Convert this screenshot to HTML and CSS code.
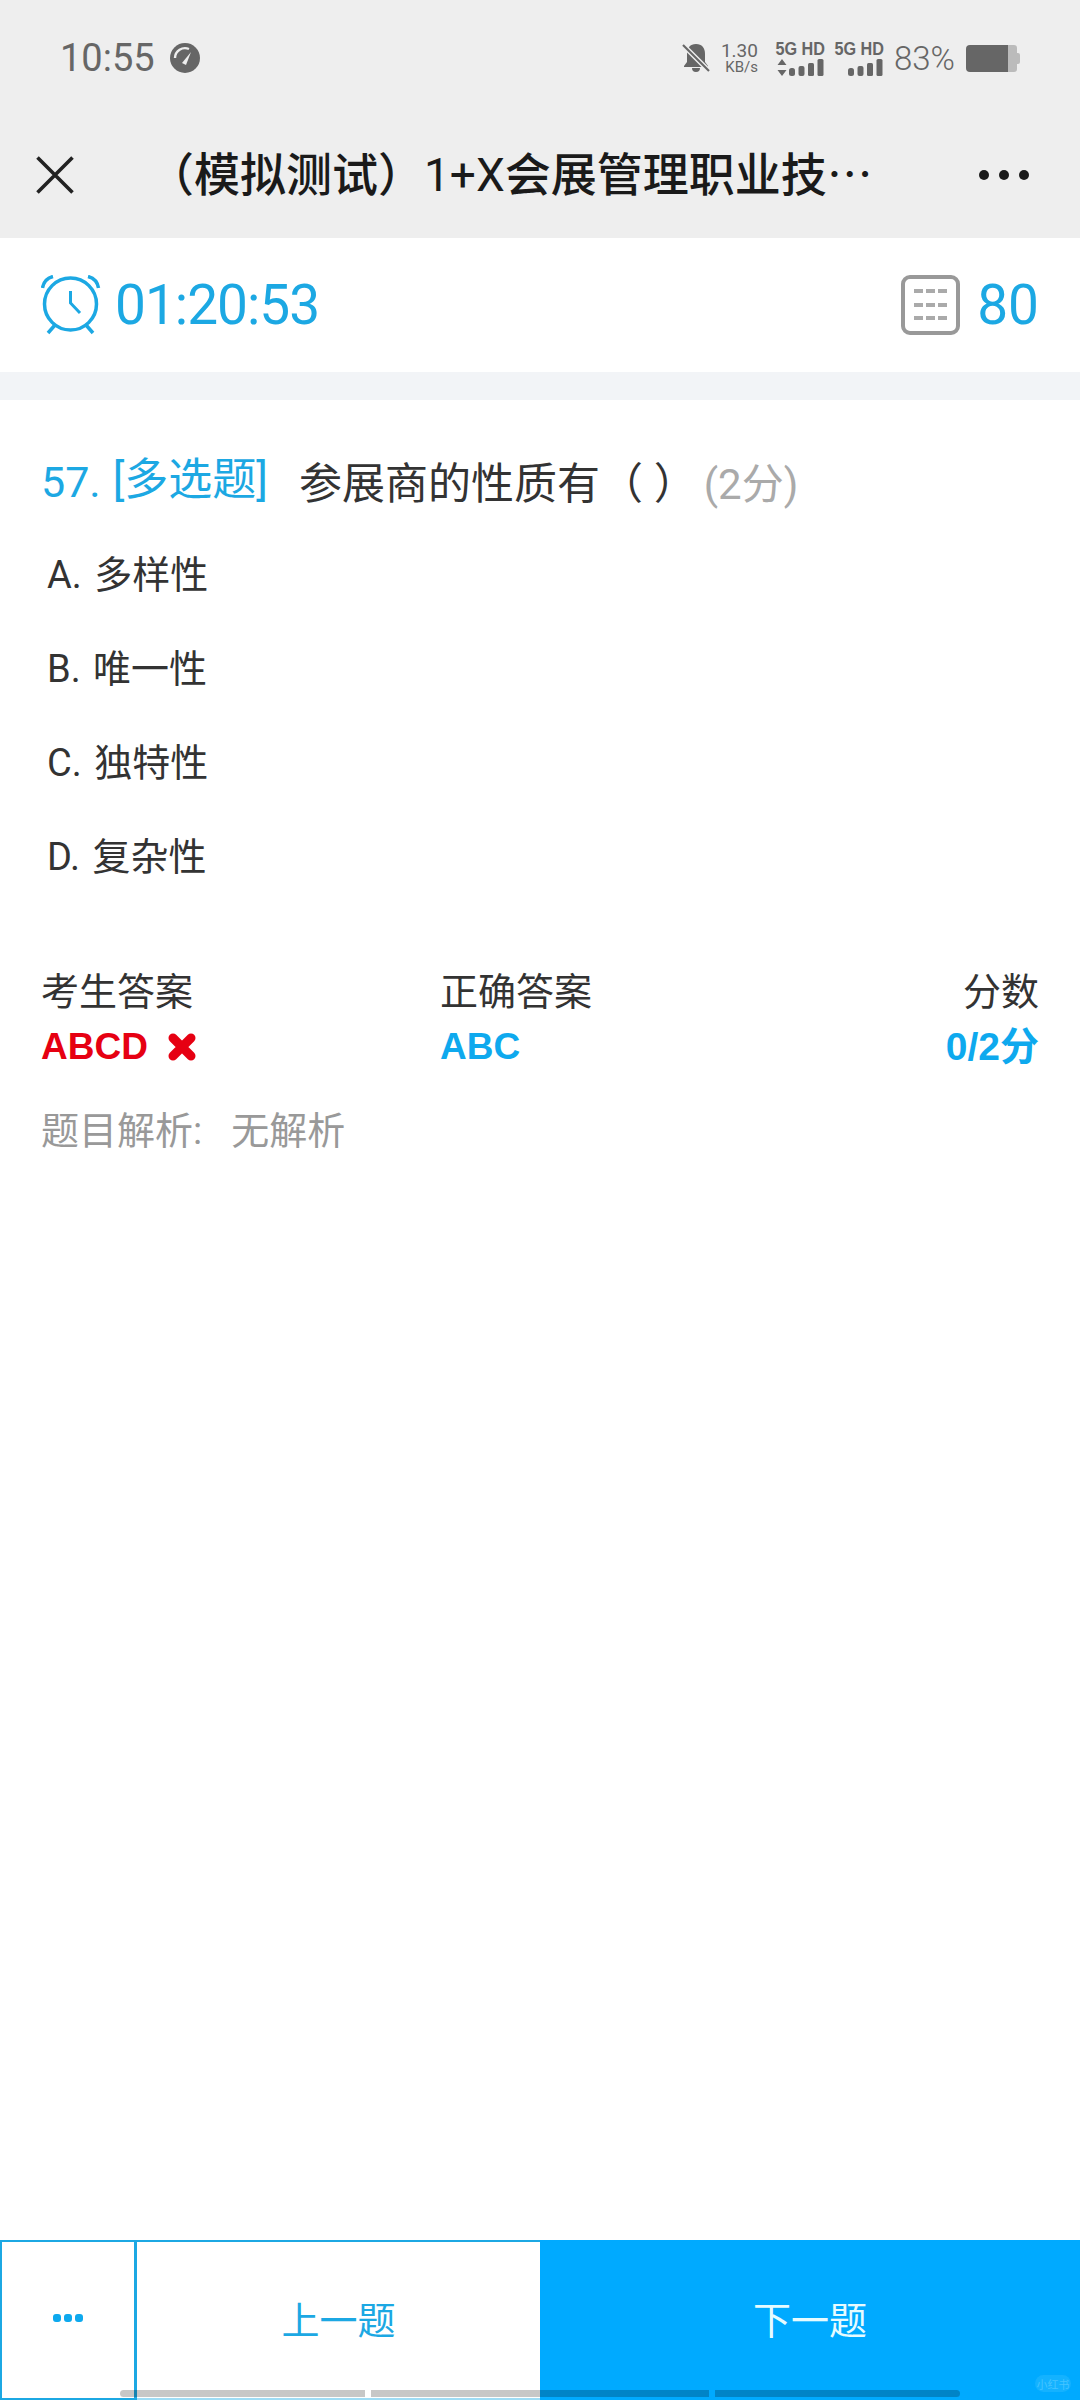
FILE: index.html
```html
<!DOCTYPE html>
<html lang="zh-CN">
<head>
    <meta charset="utf-8">
    <title>模拟测试</title>
    <link rel="stylesheet" href="styles.css">
</head>
<body>
    <header class="top">
        <div class="status">
            <span class="clock">10:55</span>
            <svg class="gauge" viewBox="0 0 30 30">
                <circle cx="15" cy="15" r="15" fill="#666"/>
                <path d="M5 15a10 10 0 0 1 14-9" fill="none" stroke="#eee" stroke-width="2.4"/>
                <path d="M12 20l9-11-5 13z" fill="#eee"/>
            </svg>
            <div class="status-right">
                <svg class="bell" viewBox="0 0 28 30">
                    <path d="M14 1c6 0 9 4 9 10v8l3 4v1H2v-1l3-4v-8C5 5 8 1 14 1zM10 25h8a4 4 0 0 1-8 0z" fill="#666"/>
                    <path d="M1 2l26 26" stroke="#eee" stroke-width="5"/>
                    <path d="M1 2l26 26" stroke="#666" stroke-width="2.2"/>
                </svg>
                <div class="speed"><span class="speed-num">1.30</span><span class="speed-unit">KB/s</span></div>
                <div class="sim">
                    <span class="sim-label">5G HD</span>
                    <svg class="signal" viewBox="0 0 48 17">
                        <path d="M5 0l4.500 6h-9zM5 17L.5 11h9z" fill="#666"/>
                        <rect x="12" y="9" width="6" height="8" rx="2.500" fill="#666"/>
                        <rect x="21.500" y="7" width="6" height="10" rx="2" fill="#666"/>
                        <rect x="31" y="4" width="6" height="13" rx="1.500" fill="#666"/>
                        <rect x="40.500" y="0" width="6" height="17" rx="1.500" fill="#666"/>
                    </svg>
                </div>
                <div class="sim">
                    <span class="sim-label">5G HD</span>
                    <svg class="signal" viewBox="0 0 48 17">
                        <rect x="12" y="9" width="6" height="8" rx="2.500" fill="#666"/>
                        <rect x="21.500" y="7" width="6" height="10" rx="2" fill="#666"/>
                        <rect x="31" y="4" width="6" height="13" rx="1.500" fill="#666"/>
                        <rect x="40.500" y="0" width="6" height="17" rx="1.500" fill="#666"/>
                    </svg>
                </div>
                <span class="battery-num">83%</span>
                <svg class="battery" viewBox="0 0 54 27">
                    <path d="M42 0h6a3 3 0 0 1 3 3v5h1a2 2 0 0 1 2 2v7a2 2 0 0 1-2 2h-1v5a3 3 0 0 1-3 3h-6z" fill="#bbb"/>
                    <path d="M4 0h38v27H4a4 4 0 0 1-4-4V4a4 4 0 0 1 4-4z" fill="#666"/>
                </svg>
            </div>
        </div>
        <div class="titlebar">
            <svg class="close" viewBox="0 0 38 38">
                <path d="M1.500 1.500l35 35M36.500 1.500l-35 35" stroke="#222" stroke-width="3.600" fill="none"/>
            </svg>
            <div class="title">（模拟测试）<span class="title-latin">1+X</span>会展管理职业技<span class="title-dots">…</span></div>
            <div class="more"><i></i><i></i><i></i></div>
        </div>
    </header>

    <div class="timer">
        <div class="timer-left">
            <svg class="alarm" viewBox="0 0 60 60">
                <circle cx="29.500" cy="29" r="26" fill="none" stroke="#1ca8e3" stroke-width="3.500"/>
                <path d="M29.500 16v12l9.500 10" fill="none" stroke="#1ca8e3" stroke-width="3"/>
                <path d="M1.500 13C2.500 7 6 3 12 1.500M57.500 13C56.500 7 53 3 47 1.500" fill="none" stroke="#1ca8e3" stroke-width="3.500"/>
                <path d="M14 50l-7 8M45 50l7 8" fill="none" stroke="#1ca8e3" stroke-width="3.500"/>
            </svg>
            <span class="timer-num">01:20:53</span>
        </div>
        <div class="timer-right">
            <svg class="sheet" viewBox="0 0 59 60">
                <rect x="2" y="2" width="55" height="56" rx="7" fill="none" stroke="#999" stroke-width="4"/>
                <path d="M13 16h9M25 16h9M37 16h9M13 30h9M25 30h9M37 30h9M13 43h9M25 43h9M37 43h9" stroke="#aaa" stroke-width="4" fill="none"/>
            </svg>
            <span class="timer-num">80</span>
        </div>
    </div>
    <div class="band"></div>

    <main class="paper">
        <div class="question">
            <span class="q-no">57.</span>
            <span class="q-type">[多选题]</span>
            <span class="q-text">参展商的性质有（ ）</span>
            <span class="q-score">(2分)</span>
        </div>

        <ul class="options">
            <li>A. 多样性</li>
            <li>B. 唯一性</li>
            <li>C. 独特性</li>
            <li>D. 复杂性</li>
        </ul>

        <div class="result">
            <span>考生答案</span>
            <span>正确答案</span>
            <span class="right">分数</span>
            <span class="val wrong">ABCD
                <svg class="wrong-mark" viewBox="0 0 30 30">
                    <path d="M6 6l18 18M24 6L6 24" stroke="#e60012" stroke-width="9" stroke-linecap="round" fill="none"/>
                </svg>
            </span>
            <span class="val">ABC</span>
            <span class="val right score">0/2分</span>
        </div>

        <div class="analysis">
            <span>题目解析:</span>
            <span>无解析</span>
        </div>
    </main>

    <footer class="bottom">
        <div class="btn-more"><i></i><i></i><i></i></div>
        <div class="btn-prev">上一题</div>
        <div class="btn-next">下一题</div>

        <div class="home-bar"><i class="seg-a"></i><i class="seg-b"></i><i class="seg-a"></i></div>
        <div class="mark">小红书</div>
    </footer>
</body>
</html>
```

FILE: styles.css
```css
body {
    display: flex;
    flex-direction: column;

    width: 1080px;
    height: 2400px;
    margin: 0;
    overflow: hidden;

    background-color: white;
    color: #333;
    font-family: Roboto, "Noto Sans CJK SC", sans-serif;
}

/* status bar + title */
.top {
    background-color: #eee;
    height: 238px;
}

.status {
    display: flex;
    align-items: center;
    height: 116px;
    padding: 0 60px;
    color: #666;
}

.clock {
    font-size: 38px;
}

.gauge {
    width: 30px;
    height: 30px;
    margin-left: 15px;
}

.status-right {
    display: flex;
    align-items: center;
    margin-left: auto;
}

.bell {
    width: 28px;
    height: 30px;
}

.speed {
    display: flex;
    flex-direction: column;
    align-items: flex-end;
    width: 36px;
    margin-left: 12px;
}

.speed-num {
    font-size: 19px;
    line-height: 19px;
}

.speed-unit {
    font-size: 15px;
    line-height: 15px;
}

.sim {
    display: flex;
    flex-direction: column;
    align-items: flex-end;
    margin-left: 12px;
}

.sim + .sim {
    margin-left: 4px;
}

.sim-label {
    font-family: "Liberation Sans", sans-serif;
    font-size: 18px;
    line-height: 18px;
    font-weight: bold;
    transform: scaleX(0.9);
    transform-origin: right;
}

.signal {
    width: 48px;
    height: 17px;
    margin-top: 1px;
}

.battery-num {
    margin-left: 10px;
    font-size: 33px;
    font-weight: 300;
}

.battery {
    width: 54px;
    height: 27px;
    margin-left: 11px;
}

.titlebar {
    display: flex;
    align-items: center;
    height: 118px;
    padding: 0 51px 4px 36px;
}

.close {
    width: 38px;
    height: 38px;
}

.title {
    margin-left: 74px;
    padding-bottom: 8px;
    color: #1a1a1a;
    font-size: 46px;
    font-weight: 500;
    white-space: nowrap;
}

.title-latin {
    font-weight: 400;
}

.title-dots {
    font-family: "Noto Sans CJK SC", sans-serif;
    font-weight: 400;
}

.more {
    display: flex;
    gap: 10px;
    margin-left: auto;
}

.more i {
    width: 10px;
    height: 10px;
    border-radius: 50%;
    background-color: #1a1a1a;
}

/* timer */
.timer {
    display: flex;
    justify-content: space-between;
    align-items: center;
    height: 134px;
    padding: 0 41px;
    color: #1ca8e3;
}

.timer-left,
.timer-right {
    display: flex;
    align-items: center;
}

.alarm {
    width: 60px;
    height: 60px;
    margin-right: 14px;
}

.sheet {
    width: 59px;
    height: 60px;
    margin-right: 17px;
}

.timer-num {
    font-size: 55px;
    letter-spacing: -1px;
}

.timer-right .timer-num {
    letter-spacing: 0;
}

.band {
    height: 28px;
    background-color: #f2f4f7;
}

/* question */
.paper {
    flex: 1;
    padding: 59px 41px 0;
}

.question {
    display: flex;
    align-items: center;
    height: 42px;
    font-size: 43px;
}

.q-no {
    margin-top: 3px;
    color: #1ca8e3;
}

.q-type {
    margin-left: 12px;
    color: #1ca8e3;
    font-size: 44px;
    position: relative;
    top: -4px;
}

.q-text {
    margin-left: 31px;
}

.q-score {
    margin-left: 7px;
    color: #aaa;
    font-size: 42px;
}

.options {
    list-style: none;
    margin: 27px 0 0;
    padding: 0 0 0 6px;
    font-size: 38px;
    line-height: 94px;
    word-spacing: 3px;
}

.result {
    display: grid;
    grid-template-columns: 399px 1fr auto;
    margin-top: 62px;
    font-size: 38px;
    line-height: 52px;
}

.right {
    text-align: right;
}

.val {
    margin-top: 3px;
    color: #0ea9ee;
    font-family: "Liberation Sans", "Noto Sans CJK SC", sans-serif;
    font-size: 37px;
    font-weight: bold;
}

.score {
    font-size: 39px;
}

.wrong {
    color: #e60012;
}

.wrong-mark {
    width: 30px;
    height: 30px;
    margin-left: 9px;
    vertical-align: -3px;
}

.analysis {
    display: flex;
    gap: 29px;
    margin-top: 33px;
    color: #999;
    font-size: 38px;
    line-height: 50px;
}

/* bottom buttons */
.bottom {
    display: flex;
    position: relative;
    height: 160px;
    font-size: 38px;
}

.bottom > div {
    display: flex;
    justify-content: center;
    align-items: center;
    box-sizing: border-box;
    padding-bottom: 5px;
}

.btn-more {
    gap: 3px;
    width: 137px;
    border: 2px solid #1ca8e3;
    border-right-width: 3px;
}

.btn-more i {
    width: 8px;
    height: 8px;
    border-radius: 3px;
    background-color: #0ea9ee;
}

.btn-prev {
    width: 403px;
    border-top: 2px solid #1ca8e3;
    border-bottom: 2px solid #9fdcf5;
    color: #1ca8e3;
}

.btn-next {
    flex: 1;
    background-color: #00aaff;
    color: #e6fbff;
}

/* overlays on the button row */
.bottom .home-bar {
    position: absolute;
    left: 120px;
    bottom: 3px;
    gap: 6px;
    padding: 0;
}

.home-bar i {
    height: 7px;
    background-color: rgba(0, 0, 0, 0.22);
}

.seg-a {
    width: 245px;
    border-radius: 4px 0 0 4px;
}

.seg-b {
    width: 338px;
}

.seg-a:last-child {
    border-radius: 0 4px 4px 0;
}

.bottom .mark {
    position: absolute;
    right: 9px;
    bottom: 8px;
    width: 36px;
    height: 17px;
    padding: 0;
    border-radius: 9px;
    background-color: #14b2ff;
    color: #45c4ff;
    font-size: 11px;
}
```
